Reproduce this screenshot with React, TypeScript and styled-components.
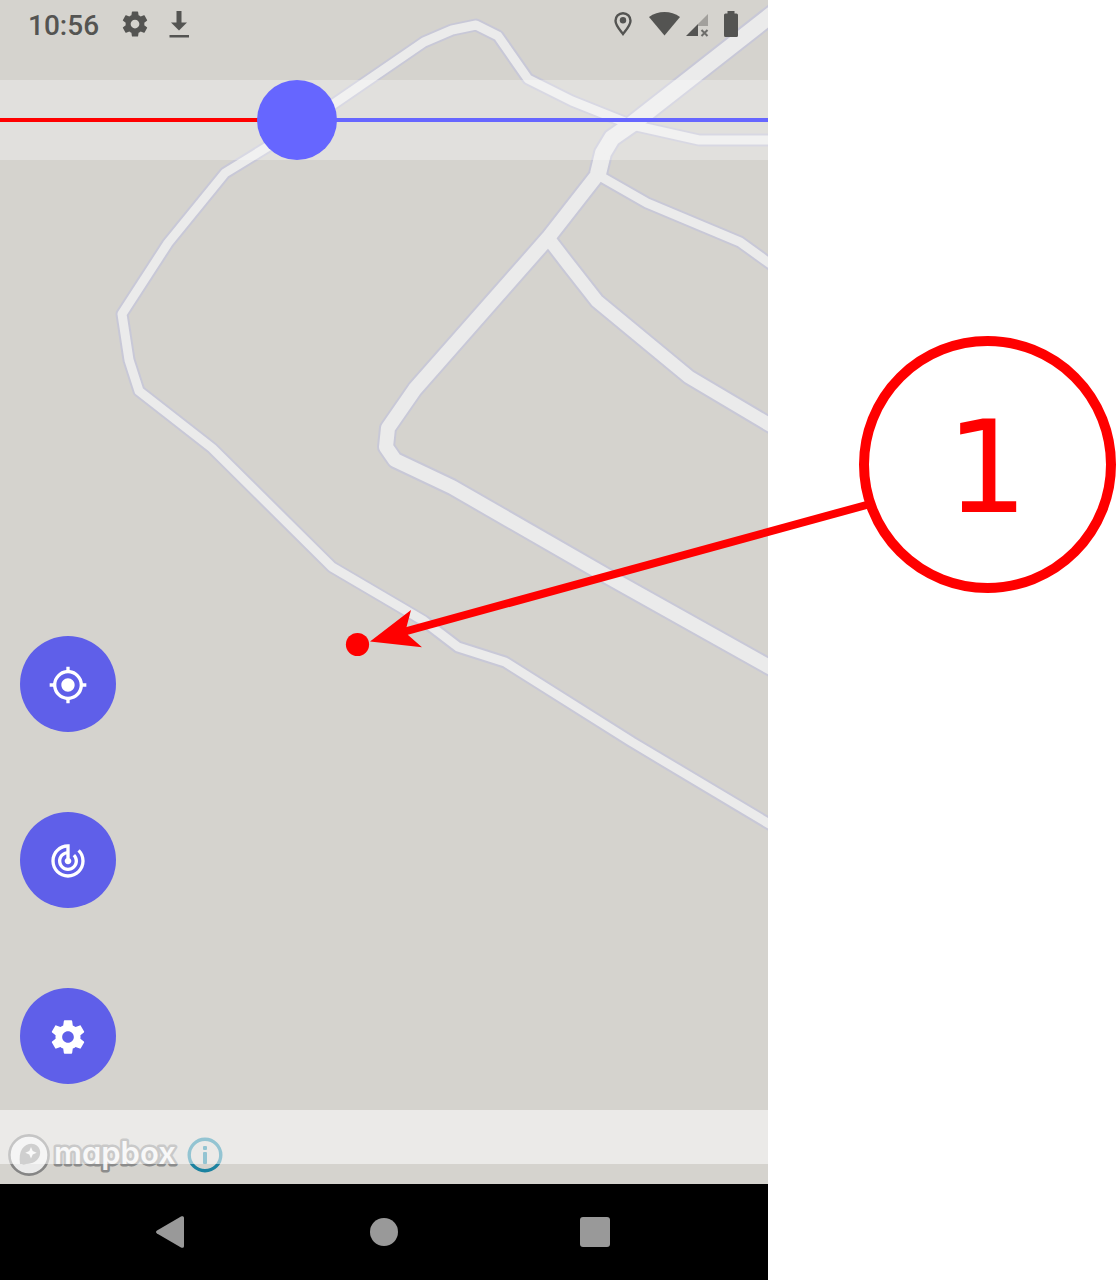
import React, { useState } from "react";
import styled, { createGlobalStyle } from "styled-components";
import { MdMyLocation, MdTrackChanges } from "react-icons/md";

const colors = {
  land: "#d5d3ce",
  road: "#ebebeb",
  casing: "#c8c8d7",
  accent: "#6666ff",
  fab: "#5f5fe9",
  alert: "#ff0000",
  status: "#545452",
  nav: "#999999",
};

const GlobalStyle = createGlobalStyle`
  *, *::before, *::after { box-sizing: border-box; }
  body { margin: 0; background: #ffffff; font-family: Roboto, "Liberation Sans", sans-serif; }
`;

const Page = styled.main`
  position: relative;
  display: grid;
  grid-template-columns: minmax(0, 768fr) minmax(0, 348fr);
  min-height: 100vh;
  overflow: hidden;
`;

const Phone = styled.section`
  display: flex;
  flex-direction: column;
`;

const Screen = styled.div`
  position: relative;
  isolation: isolate;
  flex: 1;
  display: flex;
  flex-direction: column;
  background: ${colors.land};
`;

const MapCanvas = styled.svg`
  position: absolute;
  inset: 0;
  z-index: -1;
  width: 100%;
  height: 100%;
`;

const StatusBar = styled.header`
  display: flex;
  align-items: center;
  justify-content: space-between;
  height: 48px;
  margin-bottom: 32px;
  padding: 0 28px;
  color: ${colors.status};
`;

const StatusGroup = styled.div<{ $gap: number }>`
  display: flex;
  align-items: center;
  gap: ${({ $gap }) => $gap}px;
`;

const Clock = styled.time`
  font-size: 28px;
  line-height: 32px;
  font-weight: 500;
  padding-top: 4px;
`;

const Icon = styled.svg`
  display: block;
  flex: none;
  fill: currentColor;
`;

const ZoomBar = styled.label`
  display: block;
  background: rgba(255, 255, 255, 0.3);
`;

const ZoomSlider = styled.input`
  appearance: none;
  display: block;
  width: 100%;
  height: 80px;
  margin: 0;
  cursor: pointer;
  background-color: transparent;
  background-repeat: no-repeat;
  background-position: center;
  background-size: 100% 4px;

  &::-webkit-slider-thumb {
    appearance: none;
    width: 80px;
    height: 80px;
    border: 0;
    border-radius: 50%;
    background: ${colors.accent};
  }
  &::-moz-range-thumb {
    width: 80px;
    height: 80px;
    border: 0;
    border-radius: 50%;
    background: ${colors.accent};
  }
`;

const Actions = styled.nav`
  display: flex;
  flex-direction: column;
  align-items: flex-start;
  gap: 80px;
  margin-top: auto;
  padding: 48px 20px 26px;
`;

const ActionButton = styled.button`
  display: grid;
  place-items: center;
  width: 96px;
  height: 96px;
  padding: 2px 0 0;
  border: 0;
  border-radius: 50%;
  color: #ffffff;
  background: ${colors.fab};
  cursor: pointer;
`;

const MapFooter = styled.footer`
  position: relative;
  display: flex;
  align-items: center;
  height: 74px;
  padding: 16px 8px 0;
`;

const FooterShade = styled.div`
  position: absolute;
  inset: 0 0 20px;
  background: rgba(255, 255, 255, 0.53);
  pointer-events: none;
`;

const FooterLink = styled.a`
  display: block;
`;

const Wordmark = styled.text`
  font-family: Inter, "Open Sans", sans-serif;
  font-size: 31px;
  font-weight: 600;
  font-feature-settings: "cv11";
  fill: #f0f0f0;
  stroke: #8c8c8c;
  stroke-width: 5px;
  stroke-linejoin: round;
  paint-order: stroke;
`;

const NavBar = styled.nav`
  display: flex;
  justify-content: center;
  gap: 116px;
  height: 96px;
  background: #000000;
`;

const NavButton = styled.button`
  display: grid;
  place-items: center;
  width: 96px;
  padding: 0;
  border: 0;
  background: transparent;
  color: ${colors.nav};
  cursor: pointer;
`;

const Callout = styled.svg`
  position: absolute;
  top: 0;
  left: 0;
  width: 100%;
  height: auto;
  pointer-events: none;
`;

const CalloutNumber = styled.text`
  font-family: "DejaVu Sans", sans-serif;
  font-size: 129px;
  fill: ${colors.alert};
`;

const roads = [
  {
    width: 9,
    d: "M632 125L572 101L528 79L498 36L476 25L452 30L424 42L335 103L290 133L225 173L168 243L122 314L129 360L139 391L212 448L332 567L424 621L458 647L505 662L632 742L776 828",
  },
  { width: 9, d: "M632 125L699 140H780" },
  { width: 9, d: "M598 175L647 203L740 242L776 268" },
  { width: 13, d: "M548 238L568 264L597 301L689 377L780 431" },
  { width: 16, d: "M780 8L632 124L612 138L603 153L598 174" },
  {
    width: 14,
    d: "M603 153L598 174L548 238L415 389L388 428L386 447L395 460L452 487L605 575L780 673",
  },
];

const GEAR =
  "M19.43 12.98c.04-.32.07-.64.07-.98s-.03-.66-.07-.98l2.11-1.65c.19-.15.24-.42.12-.64l-2-3.46c-.12-.22-.39-.3-.61-.22l-2.49 1c-.52-.4-1.08-.73-1.69-.98l-.38-2.65C14.46 2.18 14.25 2 14 2h-4c-.25 0-.46.18-.49.42l-.38 2.65c-.61.25-1.17.59-1.69.98l-2.49-1c-.23-.09-.49 0-.61.22l-2 3.46c-.13.22-.07.49.12.64l2.11 1.65c-.04.32-.07.65-.07.98s.03.66.07.98l-2.11 1.65c-.19.15-.24.42-.12.64l2 3.46c.12.22.39.3.61.22l2.49-1c.52.4 1.08.73 1.69.98l.38 2.65c.03.24.24.42.49.42h4c.25 0 .46-.18.49-.42l.38-2.65c.61-.25 1.17-.59 1.69-.98l2.49 1c.23.09.49 0 .61-.22l2-3.46c.12-.22.07-.49-.12-.64l-2.11-1.65zM12 15.5c-1.93 0-3.5-1.57-3.5-3.5s1.57-3.5 3.5-3.5 3.5 1.57 3.5 3.5-1.57 3.5-3.5 3.5z";

function GearIcon({ size }: { size: number }) {
  return (
    <Icon width={size} height={size} viewBox="0 0 24 24" aria-hidden="true">
      <path d={GEAR} />
    </Icon>
  );
}

function RoadMap() {
  return (
    <MapCanvas viewBox="0 0 768 1184" preserveAspectRatio="xMinYMin slice" aria-hidden="true">
      <g fill="none" strokeLinejoin="round">
        {roads.map((r) => (
          <path key={r.d} d={r.d} stroke={colors.casing} strokeWidth={r.width + 4} />
        ))}
        {roads.map((r) => (
          <path key={r.d} d={r.d} stroke={colors.road} strokeWidth={r.width} />
        ))}
      </g>
    </MapCanvas>
  );
}

function StatusIcons() {
  return (
    <StatusGroup $gap={0}>
      <Icon width={128} height={28} viewBox="612 10 128 28" aria-hidden="true">
        <path
          d="M623 13.2c-4.3 0-7.5 3.3-7.5 7.5 0 4.6 4.5 9.5 7.5 13.3 3-3.8 7.5-8.7 7.5-13.3 0-4.2-3.2-7.5-7.5-7.5z"
          fill="none"
          stroke="currentColor"
          strokeWidth="2.4"
        />
        <circle cx="623" cy="20.3" r="3.2" />
        <path d="M664.5 35.5L649 17c4.5-3.5 10-5 15.5-5s11 1.5 15.5 5z" />
        <path d="M708 14v12h-10v-2z" opacity="0.4" />
        <path d="M698 24v12h-12z" />
        <path d="M701.5 30l6 6M707.5 30l-6 6" stroke="currentColor" strokeWidth="2" opacity="0.8" />
        <path d="M727.5 11h7v2.5h2a1.5 1.5 0 0 1 1.5 1.5v20.5a1.5 1.5 0 0 1-1.5 1.5h-11a1.5 1.5 0 0 1-1.5-1.5V15a1.5 1.5 0 0 1 1.5-1.5h2z" />
      </Icon>
    </StatusGroup>
  );
}

function MapboxLogo() {
  return (
    <FooterLink href="#mapbox" aria-label="Mapbox">
      <Icon width={172} height={44} viewBox="8 1133 172 44">
        <circle cx="29" cy="1155" r="19.6" fill="#eaeaea" stroke="#858585" strokeWidth="2.6" />
        <path
          d="M20 1164c-.8-6.5-.3-11.5 2-15 3-4.5 8.5-6.3 12.500-4.800 5.500 2 7 8.300 4.500 13-3.200 6-10.500 7.500-19 6.800z"
          fill="#9a9a9a"
        />
        <path d="M31 1147l1.700 4 4 1.700-4 1.700-1.700 4-1.700-4-4-1.700 4-1.700z" fill="#f4f4f4" />
        <Wordmark x="54" y="1164">mapbox</Wordmark>
      </Icon>
    </FooterLink>
  );
}

function InfoLink() {
  return (
    <FooterLink href="#attribution" aria-label="Map attribution">
      <Icon width={50} height={44} viewBox="180 1133 50 44">
        <circle cx="205" cy="1155" r="15.8" fill="none" stroke="#1b82a0" strokeWidth="3.4" />
        <rect x="203" y="1146" width="4" height="4" rx="1" fill="#1b82a0" />
        <rect x="203" y="1152" width="4" height="12" rx="1" fill="#1b82a0" />
      </Icon>
    </FooterLink>
  );
}

export default function App() {
  const [zoom, setZoom] = useState(374);
  const ratio = zoom / 1000;
  const stop = `calc(40px + (100% - 80px) * ${ratio})`;

  return (
    <>
      <GlobalStyle />
      <Page>
        <Phone>
          <Screen>
            <RoadMap />
            <StatusBar>
              <StatusGroup $gap={21}>
                <Clock>10:56</Clock>
                <GearIcon size={30} />
                <Icon width={20} height={28} viewBox="171 10 20 28" overflow="visible" aria-hidden="true">
                  <path d="M176.500 11h5v11.500h5.500l-8 8-8-8h5.500zM169.500 35h19.500v2.400h-19.500z" />
                </Icon>
              </StatusGroup>
              <StatusIcons />
            </StatusBar>
            <ZoomBar>
              <ZoomSlider
                type="range"
                aria-label="Zoom"
                min={0}
                max={1000}
                value={zoom}
                onChange={(e) => setZoom(Number(e.target.value))}
                style={{
                  backgroundImage: `linear-gradient(to right, ${colors.alert} ${stop}, ${colors.accent} ${stop})`,
                }}
              />
            </ZoomBar>
            <Actions>
              <ActionButton type="button" aria-label="My location">
                <MdMyLocation size={40} />
              </ActionButton>
              <ActionButton type="button" aria-label="Track">
                <MdTrackChanges size={40} />
              </ActionButton>
              <ActionButton type="button" aria-label="Settings">
                <GearIcon size={40} />
              </ActionButton>
            </Actions>
            <MapFooter>
              <MapboxLogo />
              <InfoLink />
              <FooterShade />
            </MapFooter>
          </Screen>
          <NavBar>
            <NavButton type="button" aria-label="Back">
              <Icon width={32} height={32} viewBox="0 0 32 32">
                <path d="M1 14.500L25 .5c1.500-.8 3-.3 3 1.500v28c0 1.800-1.500 2.300-3 1.500L1 17.500c-1.300-.8-1.300-2.200 0-3z" />
              </Icon>
            </NavButton>
            <NavButton type="button" aria-label="Home">
              <Icon width={32} height={32} viewBox="0 0 32 32">
                <circle cx="16" cy="16" r="14" />
              </Icon>
            </NavButton>
            <NavButton type="button" aria-label="Recent apps">
              <Icon width={32} height={32} viewBox="0 0 32 32">
                <rect x="0" y="1" width="30" height="30" rx="3" />
              </Icon>
            </NavButton>
          </NavBar>
        </Phone>
        <Callout viewBox="0 0 1116 1280" role="img" aria-label="Callout 1">
          <circle cx="357.5" cy="644.5" r="11.6" fill={colors.alert} />
          <path d="M870 504L405 631.5" stroke={colors.alert} strokeWidth="8" />
          <path d="M370 641.5L411 610L406 629L408 635L422 647.3z" fill={colors.alert} />
          <circle cx="987.5" cy="464.5" r="123.5" fill="none" stroke={colors.alert} strokeWidth="10" />
          <CalloutNumber x="946" y="512">1</CalloutNumber>
        </Callout>
      </Page>
    </>
  );
}
